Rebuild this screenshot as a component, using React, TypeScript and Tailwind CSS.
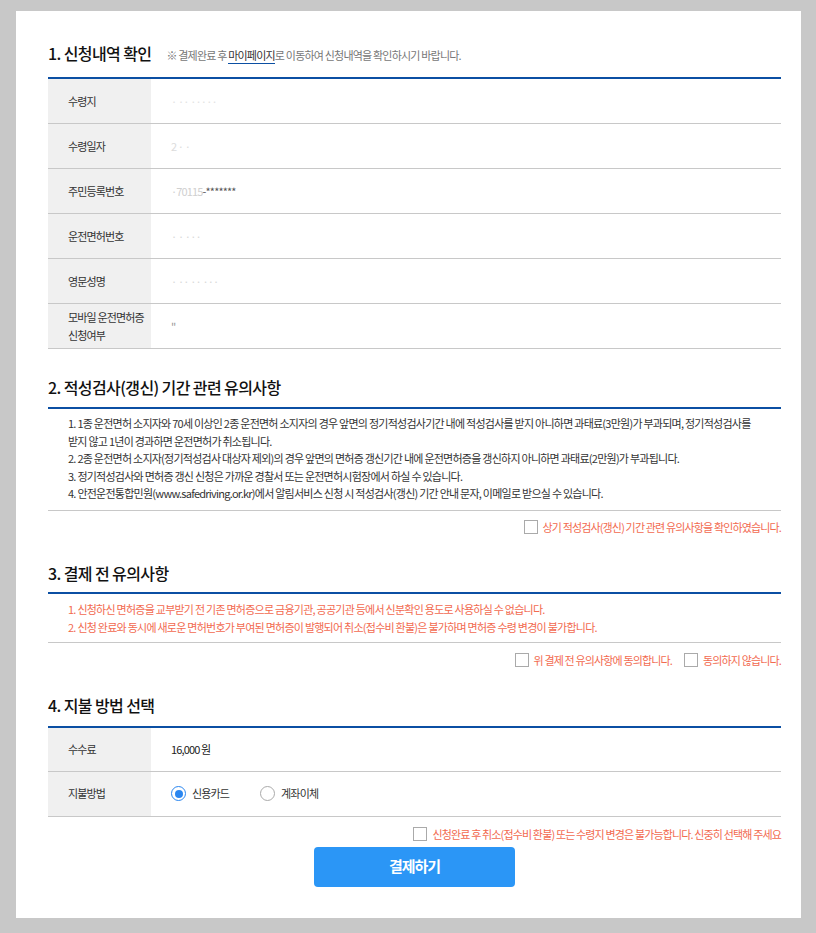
import React from 'react';

const font = { fontFamily: '"Noto Sans CJK KR", "Noto Sans", sans-serif' };

const Checkbox = () => (
  <span className="inline-block w-[14px] h-[14px] border border-[#aaaaaa] bg-white shrink-0" />
);

const Radio = ({ checked }: { checked?: boolean }) => (
  <span
    className={
      checked
        ? 'flex items-center justify-center w-[15px] h-[15px] rounded-full border border-[#2a86f0] bg-white shrink-0'
        : 'flex items-center justify-center w-[15px] h-[15px] rounded-full border border-[#aaaaaa] bg-white shrink-0'
    }
  >
    {checked && <span className="w-[8px] h-[8px] rounded-full bg-[#2a86f0]" />}
  </span>
);

const SectionTitle = ({ children, className }: { children: React.ReactNode; className: string }) => (
  <h2 className={'text-[16px] leading-[24px] font-medium tracking-[-0.6px] text-[#111] ' + className}>{children}</h2>
);

const infoRows: { label: React.ReactNode; value: React.ReactNode }[] = [
  { label: '수령지', value: <span className="text-[#e2e2e2]">· ·· ·····</span> },
  { label: '수령일자', value: <span className="text-[#dcdcdc]">2 · ·</span> },
  {
    label: '주민등록번호',
    value: (
      <span>
        <span className="text-[#d0d0d0]">·70115</span>
        <span className="text-[#555]">-*******</span>
      </span>
    ),
  },
  { label: '운전면허번호', value: <span className="text-[#d8d8d8]">· · ···</span> },
  { label: '영문성명', value: <span className="text-[#d8d8d8]">· ·· ·· ···</span> },
  {
    label: (
      <>
        모바일 운전면허증
        <br />
        신청여부
      </>
    ),
    value: <span className="text-[#999]">"</span>,
  },
];

export default function App() {
  return (
    <div className="min-h-[933px] bg-[#c8c8c8] pt-[11px] pb-[15px]" style={font}>
      <div className="ml-4 w-[785px] bg-white pl-8 pr-5 pt-[30px] pb-[31px] text-[#333]">
        {/* 1. 신청내역 확인 */}
        <div className="flex items-baseline gap-[15px] mb-[12px]">
          <SectionTitle className="">1. 신청내역 확인</SectionTitle>
          <p className="text-[11px] tracking-[-0.8px] text-[#777]">
            ※ 결제완료 후{' '}
            <span className="text-[#333] border-b border-[#0b4fa3]">마이페이지</span>로 이동하여 신청내역을
            확인하시기 바랍니다.
          </p>
        </div>
        <div className="border-t-2 border-[#0b4fa3]">
          {infoRows.map((row, i) => (
            <div key={i} className="flex h-[45px] border-b border-[#c8c8c8] text-[11px] tracking-[-0.85px]">
              <div className="w-[103px] bg-[#f0f0f0] pl-5 flex items-center leading-[18px] text-[#333]">
                <span>{row.label}</span>
              </div>
              <div className="flex-1 pl-5 flex items-center">{row.value}</div>
            </div>
          ))}
        </div>

        {/* 2. 적성검사 */}
        <SectionTitle className="mt-[26px] mb-[8px]">2. 적성검사(갱신) 기간 관련 유의사항</SectionTitle>
        <div className="border-t-2 border-[#0b4fa3]">
          <div className="border-b border-[#c8c8c8] pl-5 pt-[6px] pb-[7px] text-[11px] leading-[17.5px] tracking-[-0.75px] text-[#333] whitespace-nowrap">
            <p>
              1. 1종 운전면허 소지자와 70세 이상인 2종 운전면허 소지자의 경우 앞면의 정기적성검사기간 내에 적성검사를 받지
              아니하면 과태료(3만원)가 부과되며, 정기적성검사를
              <br />
              받지 않고 1년이 경과하면 운전면허가 취소됩니다.
            </p>
            <p>
              2. 2종 운전면허 소지자(정기적성검사 대상자 제외)의 경우 앞면의 면허증 갱신기간 내에 운전면허증을 갱신하지
              아니하면 과태료(2만원)가 부과됩니다.
            </p>
            <p>3. 정기적성검사와 면허증 갱신 신청은 가까운 경찰서 또는 운전면허시험장에서 하실 수 있습니다.</p>
            <p>
              4. 안전운전통합민원(www.safedriving.or.kr)에서 알림서비스 신청 시 적성검사(갱신) 기간 안내 문자, 이메일로
              받으실 수 있습니다.
            </p>
          </div>
        </div>
        <div className="flex justify-end items-center gap-[5px] pt-[9px] text-[11px] leading-[14px] tracking-[-0.85px] text-[#f26a4f]">
          <Checkbox />
          <span>상기 적성검사(갱신) 기간 관련 유의사항을 확인하였습니다.</span>
        </div>

        {/* 3. 결제 전 유의사항 */}
        <SectionTitle className="mt-[27px] mb-[7px]">3. 결제 전 유의사항</SectionTitle>
        <div className="border-t-2 border-[#0b4fa3]">
          <div className="border-b border-[#c8c8c8] pl-5 pt-[6px] pb-[6px] text-[11px] leading-[18px] tracking-[-0.75px] text-[#f26a4f] whitespace-nowrap">
            <p>1. 신청하신 면허증을 교부받기 전 기존 면허증으로 금융기관, 공공기관 등에서 신분확인 용도로 사용하실 수 없습니다.</p>
            <p>
              2. 신청 완료와 동시에 새로운 면허번호가 부여된 면허증이 발행되어 취소(접수비 환불)은 불가하며 면허증 수령 변경이
              불가합니다.
            </p>
          </div>
        </div>
        <div className="flex justify-end items-center pt-[10px] text-[11px] leading-[14px] tracking-[-0.85px] text-[#f26a4f]">
          <div className="flex items-center gap-[5px]">
            <Checkbox />
            <span>위 결제 전 유의사항에 동의합니다.</span>
          </div>
          <div className="flex items-center gap-[5px] ml-[12px]">
            <Checkbox />
            <span>동의하지 않습니다.</span>
          </div>
        </div>

        {/* 4. 지불 방법 선택 */}
        <SectionTitle className="mt-[26px] mb-[9px]">4. 지불 방법 선택</SectionTitle>
        <div className="border-t-2 border-[#0b4fa3] text-[11px] tracking-[-0.85px]">
          <div className="flex h-[44px] border-b border-[#c8c8c8]">
            <div className="w-[103px] bg-[#f0f0f0] pl-5 flex items-center">수수료</div>
            <div className="flex-1 pl-5 flex items-center text-[#222]">16,000 원</div>
          </div>
          <div className="flex h-[45px] border-b border-[#c8c8c8]">
            <div className="w-[103px] bg-[#f0f0f0] pl-5 flex items-center">지불방법</div>
            <div className="flex-1 pl-5 flex items-center gap-[31px]">
              <label className="flex items-center gap-[6px]">
                <Radio checked />
                <span>신용카드</span>
              </label>
              <label className="flex items-center gap-[6px]">
                <Radio />
                <span>계좌이체</span>
              </label>
            </div>
          </div>
        </div>
        <div className="flex justify-end items-center gap-[5px] pt-[10px] text-[11px] leading-[14px] tracking-[-0.85px] text-[#f26a4f]">
          <Checkbox />
          <span>신청완료 후 취소(접수비 환불) 또는 수령지 변경은 불가능합니다. 신중히 선택해 주세요</span>
        </div>
        <div className="flex justify-center mt-[6px]">
          <button className="w-[201px] h-[40px] rounded-[4px] bg-[#2b96f6] text-white text-[15px] font-bold tracking-[-1px]">
            결제하기
          </button>
        </div>
      </div>
    </div>
  );
}
